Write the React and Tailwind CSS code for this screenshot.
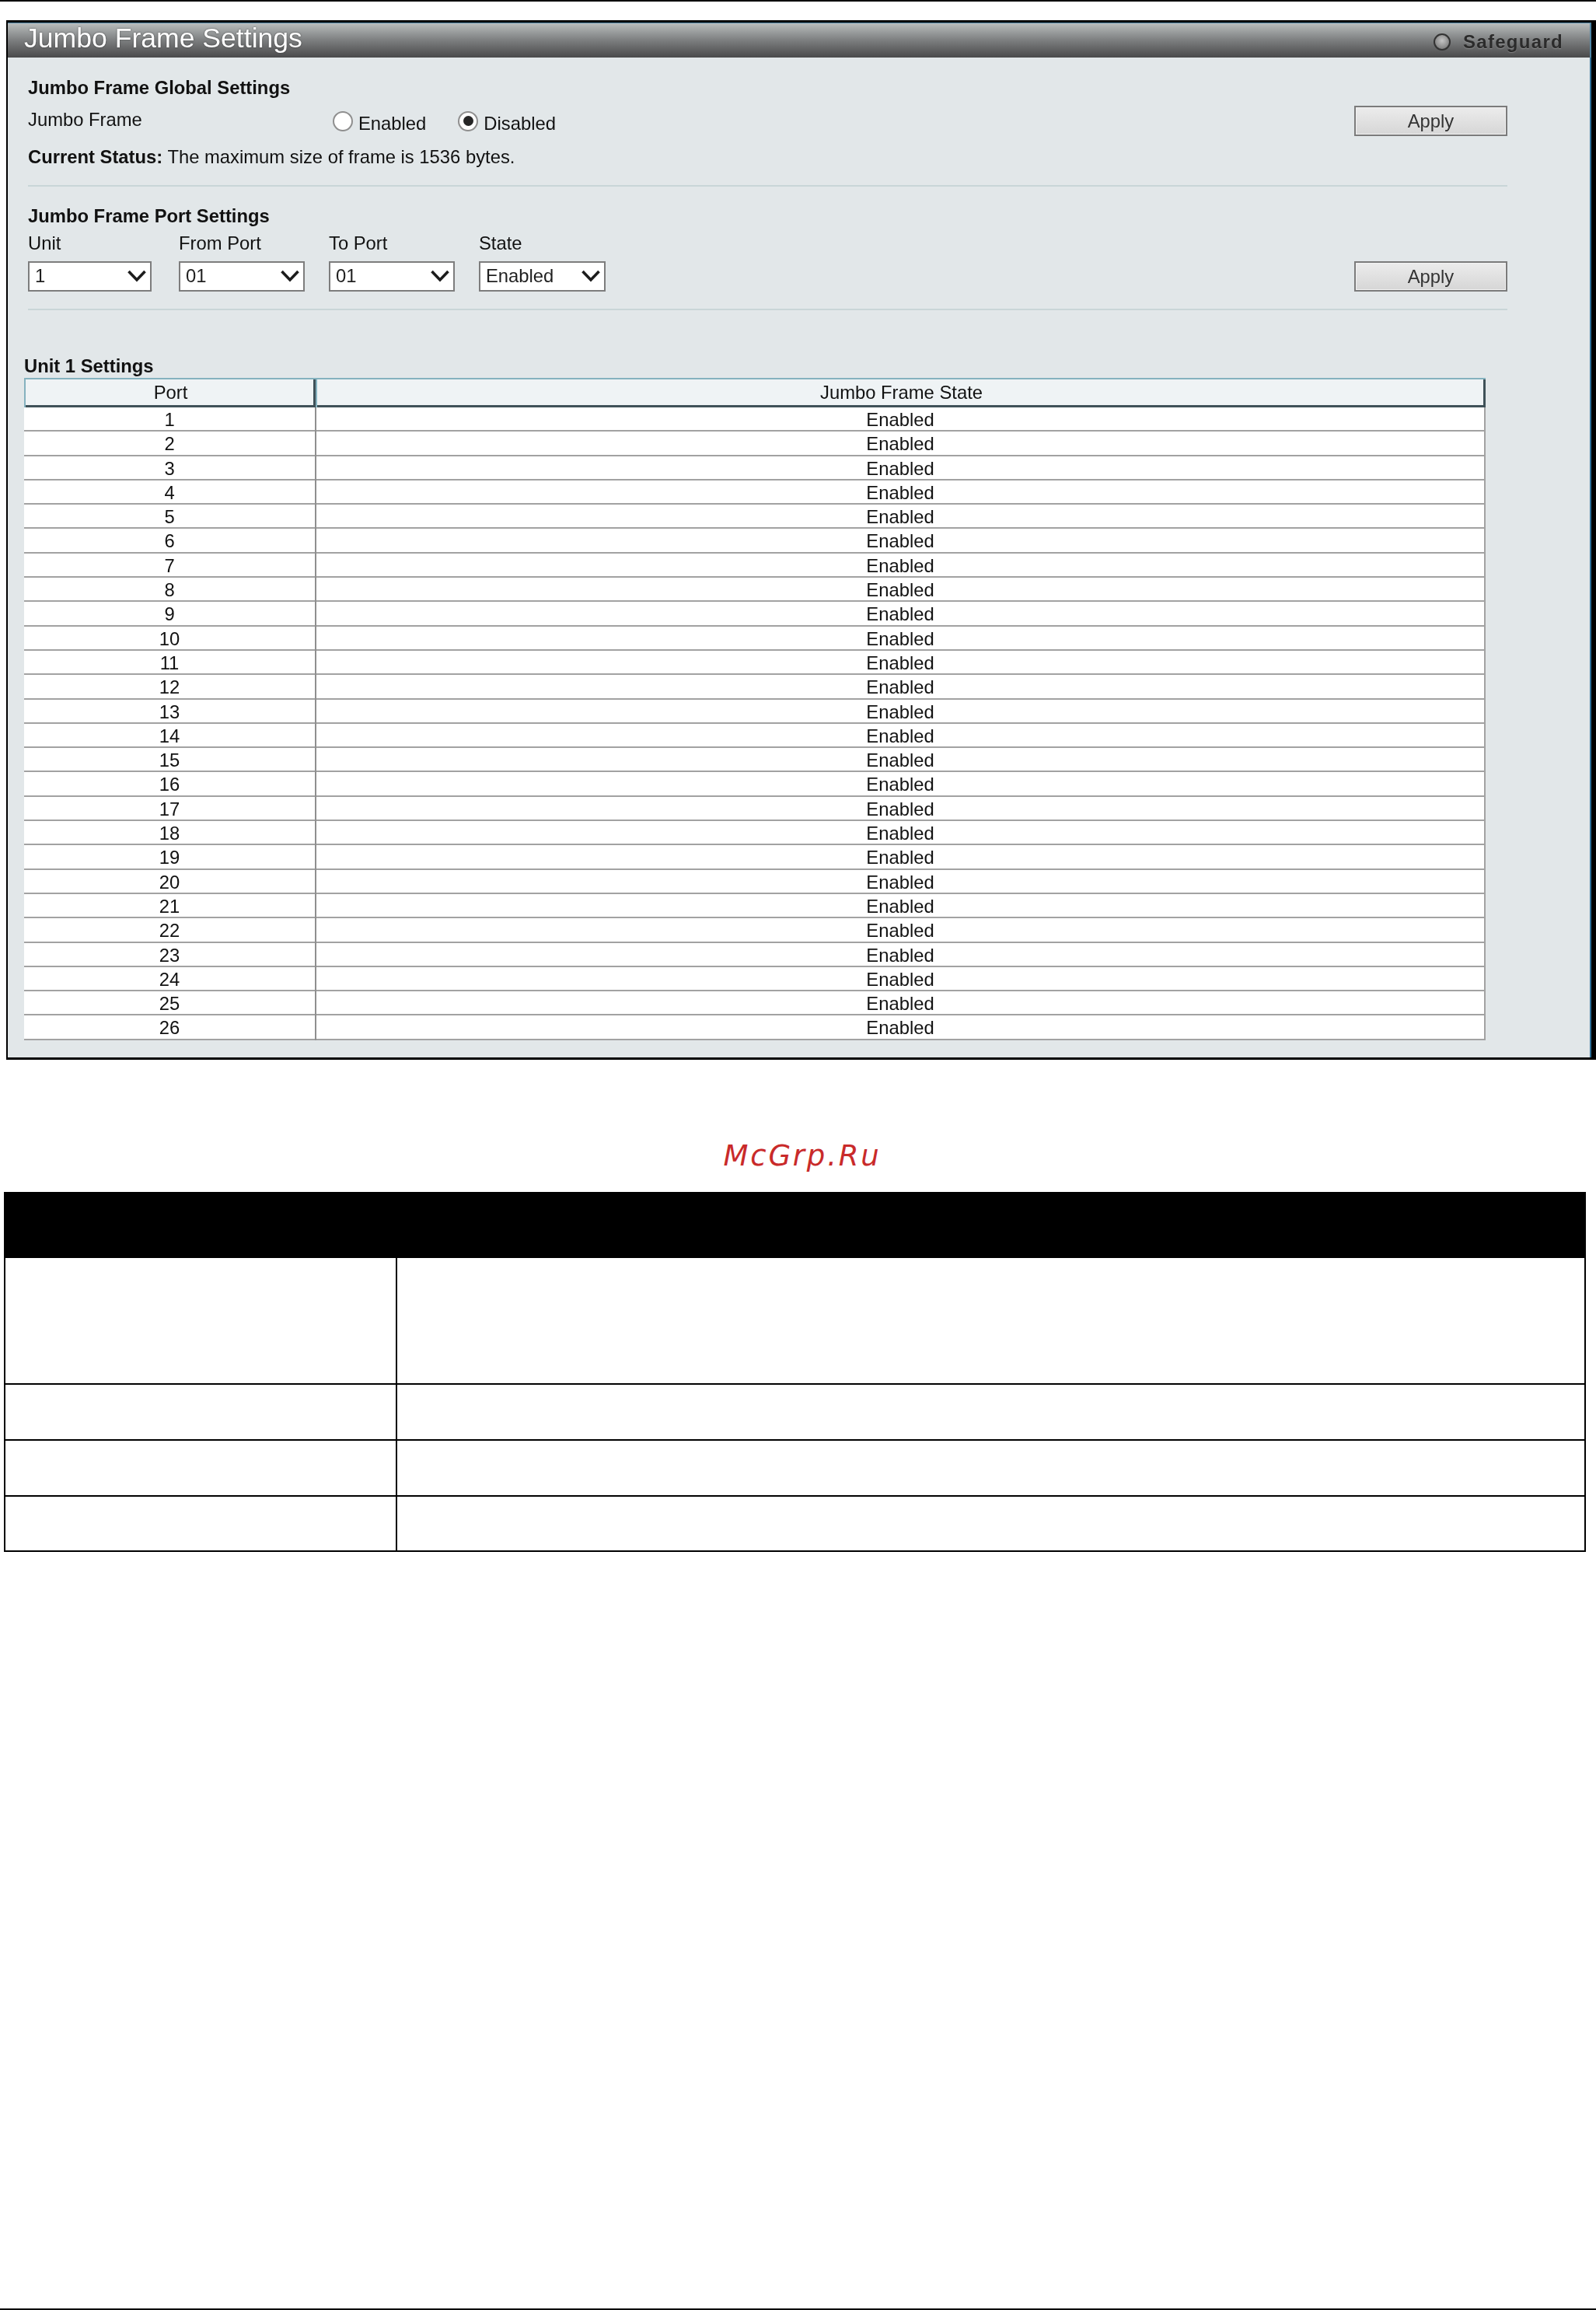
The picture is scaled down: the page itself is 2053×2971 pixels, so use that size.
import React from 'react';

const sans = { fontFamily: '"Liberation Sans", Arial, sans-serif' };

const Chevron = () => (
  <svg width="24" height="16" viewBox="0 0 24 16" className="absolute right-[7px] top-[11px] pointer-events-none">
    <path d="M1.5 2 L12 13 L22.5 2" fill="none" stroke="#1c1c1c" strokeWidth="3.6" />
  </svg>
);

const Select = ({ value, options, width }) => (
  <div className={`relative h-[39px] ${width}`}>
    <select
      defaultValue={value}
      className="appearance-none w-full h-full bg-white border-2 border-[#7d7d7d] pl-[7px] pb-[2px] text-[23.8px] text-[#1f1f1f] outline-none"
    >
      {options.map(o => (
        <option key={o}>{o}</option>
      ))}
    </select>
    <Chevron />
  </div>
);

const Radio = ({ checked, label }) => (
  <label className="flex items-center">
    <span className="w-[26px] h-[26px] rounded-full border-2 border-[#8f8f8f] bg-white flex items-center justify-center -mt-[6px]">
      {checked && <span className="w-[13px] h-[13px] rounded-full bg-[#262626]" />}
    </span>
    <span className="ml-[7px] text-[23.8px] text-[#111]">{label}</span>
  </label>
);

const ApplyButton = () => (
  <button className="w-[197px] h-[39px] border-2 border-[#7b7b7b] bg-gradient-to-b from-[#ececec] to-[#d6d6d6] shadow-[inset_0_0_0_1px_#f2f2f2] text-[23.8px] text-[#333]">
    Apply
  </button>
);

const Divider = ({ className }) => <div className={`w-[1903px] h-[2px] bg-[#c9d6d8] ${className}`} />;

const ports = Array.from({ length: 26 }, (_, i) => i + 1);

const App = () => {
  return (
    <div className="relative w-[2053px] h-[2971px] bg-white flex flex-col" style={sans}>
      <div className="h-[2px] bg-black" />

      {/* screenshot panel */}
      <div className="mt-[24px] ml-[8px] w-[2045px] h-[1337px] border-t-[3px] border-l-[2px] border-b-[3px] border-r-[6px] border-black bg-[#e2e7e9] flex flex-col blur-[0.5px]">
        <div className="h-[45px] shrink-0 flex items-center justify-between pl-[21px] pr-[34px] border-t border-r-2 border-[#4f86a6] bg-gradient-to-b from-[#b9bdbd] via-[#7c7e7f] to-[#4a4a4b]">
          <span className="text-[35.6px] leading-[40px] text-white -mt-[6px] [text-shadow:0_0_2px_rgba(40,40,40,0.8)]">Jumbo Frame Settings</span>
          <div className="flex items-center mt-[4px]">
            <span className="w-[22px] h-[22px] rounded-full border-2 border-[#333] bg-[radial-gradient(circle_at_50%_40%,#c4c4c4,#6a6a6a)]" />
            <span className="ml-[16px] text-[24px] leading-[24px] font-bold tracking-[1.3px] text-[#2b2b2b] blur-[0.6px] [text-shadow:0_1px_1px_rgba(255,255,255,0.25)]">Safeguard</span>
          </div>
        </div>

        <div className="flex-1 border-r-2 border-[#2f6f97] pl-[26px]">
          <h2 className="mt-[27px] h-[24px] text-[23.8px] leading-[24px] font-bold text-[#111]">Jumbo Frame Global Settings</h2>

          <div className="mt-[11px] w-[1903px] h-[39px] flex items-center justify-between">
            <div className="flex items-center">
              <span className="w-[392px] -mt-[4px] text-[23.8px] text-[#111]">Jumbo Frame</span>
              <div className="flex items-center gap-[41px] mt-[6px]">
                <Radio label="Enabled" />
                <Radio label="Disabled" checked />
              </div>
            </div>
            <ApplyButton />
          </div>

          <p className="mt-[15px] h-[24px] text-[23.8px] leading-[24px] text-[#111]">
            <b className="font-bold">Current Status:</b> The maximum size of frame is 1536 bytes.
          </p>

          <Divider className="mt-[24px]" />

          <h2 className="mt-[26px] h-[24px] text-[23.8px] leading-[24px] font-bold text-[#111]">Jumbo Frame Port Settings</h2>

          <div className="mt-[11px] w-[1903px] flex items-end justify-between">
            <div className="grid grid-cols-[194px_193px_193px_163px] gap-y-[11px] text-[23.8px] leading-[24px] text-[#111]">
              <span>Unit</span>
              <span>From Port</span>
              <span>To Port</span>
              <span>State</span>
              <Select value="1" options={['1']} width="w-[159px]" />
              <Select value="01" options={['01']} width="w-[162px]" />
              <Select value="01" options={['01']} width="w-[162px]" />
              <Select value="Enabled" options={['Enabled', 'Disabled']} width="w-[163px]" />
            </div>
            <ApplyButton />
          </div>

          <Divider className="mt-[22px]" />

          <h3 className="mt-[60px] -ml-[5px] h-[24px] text-[23.8px] leading-[24px] font-bold text-[#111]">Unit 1 Settings</h3>

          {/* port table */}
          <div className="mt-[3px] -ml-[5px] w-[1880px] text-[23.8px] text-[#111]">
            <div className="grid grid-cols-[375px_1fr] h-[38px] text-center leading-[34px]">
              <div className="border-t-2 border-l-2 border-[#85b2bf] bg-[#eff3f5] shadow-[inset_-3px_-3px_0_#3f5158]">Port</div>
              <div className="border-t-2 border-l-2 border-[#85b2bf] bg-[#eff3f5] shadow-[inset_-3px_-3px_0_#3f5158]">Jumbo Frame State</div>
            </div>
            {ports.map(p => (
              <div key={p} className="grid grid-cols-[376px_1fr] h-[31.3px] bg-white border-b-2 border-[#a2a2a2] border-r-2 text-center leading-[32px]">
                <div className="border-r-2 border-[#8f8f8f]">{p}</div>
                <div>Enabled</div>
              </div>
            ))}
          </div>
        </div>
      </div>

      <div
        className="mt-[102px] pl-[11px] h-[44px] text-center text-[37px] leading-[44px] italic tracking-[2.8px] text-[#c92a2a]"
        style={{ fontFamily: '"DejaVu Sans", sans-serif' }}
      >
        McGrp.Ru
      </div>

      {/* empty parameter table */}
      <div className="mt-[24px] ml-[5px] w-[2035px] border-x-2 border-b-2 border-black">
        <div className="h-[85px] -mx-[2px] bg-black" />
        <div className="grid grid-cols-[504px_1fr] h-[163px] border-b-2 border-black">
          <div className="border-r-2 border-black" />
          <div />
        </div>
        <div className="grid grid-cols-[504px_1fr] h-[72px] border-b-2 border-black">
          <div className="border-r-2 border-black" />
          <div />
        </div>
        <div className="grid grid-cols-[504px_1fr] h-[72px] border-b-2 border-black">
          <div className="border-r-2 border-black" />
          <div />
        </div>
        <div className="grid grid-cols-[504px_1fr] h-[69px]">
          <div className="border-r-2 border-black" />
          <div />
        </div>
      </div>

      <div className="mt-auto h-[2px] bg-black" />
    </div>
  );
};

export default App;
